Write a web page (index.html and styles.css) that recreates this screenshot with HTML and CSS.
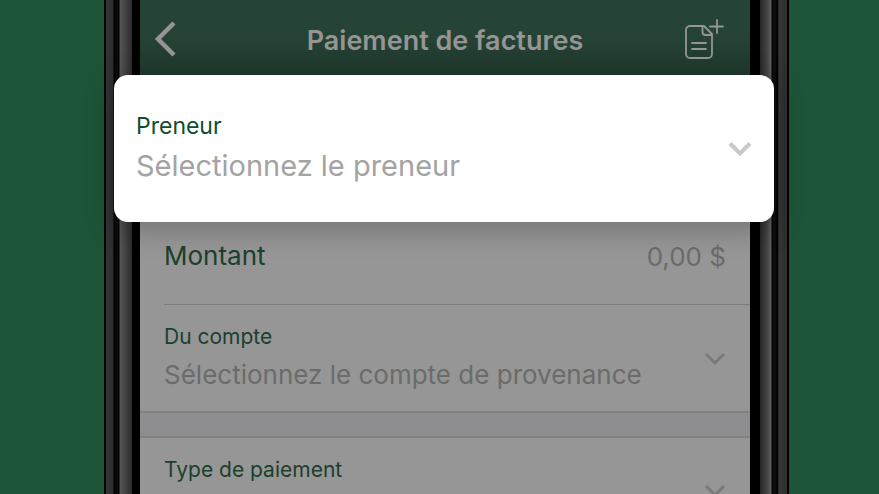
FILE: index.html
```html
<!DOCTYPE html>
<html lang="fr">
<head>
    <meta charset="UTF-8">
    <meta name="viewport" content="width=device-width, initial-scale=1.0">
    <title>Paiement de factures</title>
    <link rel="stylesheet" href="styles.css">
</head>
<body>

<div class="phone">
    <header class="topbar">
        <button class="icon-btn" type="button" aria-label="Retour">
            <svg width="40" height="42" viewBox="0 0 40 42"><path d="M20 5 L4 21 L20 37" fill="none" stroke="#959595" stroke-width="4.500"/></svg>
        </button>
        <h1>Paiement de factures</h1>
        <button class="icon-btn" type="button" aria-label="Ajouter une facture">
            <svg width="40" height="42" viewBox="0 0 40 42" fill="none" stroke="#959595" stroke-width="1.800" stroke-linecap="round" stroke-linejoin="round">
                <path d="M18.500 8H6a4 4 0 0 0-4 4v24a4 4 0 0 0 4 4h18a4 4 0 0 0 4-4V16L20 8h-1.500v6a3 3 0 0 0 3 3H28"/>
                <path d="M8 25h14M8 31h14"/>
                <path d="M33 2v13M26 8.500h13"/>
            </svg>
        </button>
    </header>

    <main>
        <div class="row card">
            <div class="field">
                <label for="payee">Preneur</label>
                <select id="payee">
                    <option>Sélectionnez le preneur</option>
                </select>
            </div>
            <svg class="chevron" width="24" height="16" viewBox="0 0 24 16"><path d="M2 2.500 L12 12.500 L22 2.500"/></svg>
        </div>

        <div class="row amount">
            <label for="amount">Montant</label>
            <input type="text" id="amount" placeholder="0,00 $">
        </div>

        <div class="row">
            <div class="field">
                <label for="account">Du compte</label>
                <select id="account">
                    <option>Sélectionnez le compte de provenance</option>
                </select>
            </div>
            <svg class="chevron" width="22" height="14" viewBox="0 0 22 14"><path d="M2 3 L11 12 L20 3"/></svg>
        </div>

        <div class="divider"></div>

        <div class="row">
            <div class="field">
                <label for="type">Type de paiement</label>
                <select id="type">
                    <option>Paiement</option>
                </select>
            </div>
            <svg class="chevron" width="22" height="14" viewBox="0 0 22 14"><path d="M2 2 L11 11 L20 2"/></svg>
        </div>
    </main>
</div>

</body>
</html>
```

FILE: styles.css
```css
* {
    box-sizing: border-box;
}
body {
    font-family: Inter, "Liberation Sans", sans-serif;
    background-color: #1c5539;
    margin: 0;
    padding: 0 90px 0 104px;
    overflow: hidden;
}
/* metal edges of the phone, drawn on both sides of the screen */
.phone {
    height: 100vh;
    overflow-x: visible;
    overflow-y: clip;
    padding: 0 39px 0 36px;
    background:
        linear-gradient(to right, #000 2px, #343434 2px, #2e2e2e 9px, #000 10px, #111 13px, #000 14px, #000 15px, #555 16px, #484848 20px, #2c2c2c 28px, #000 28px) left / 36px 100% no-repeat,
        linear-gradient(to left, #000 2px, #2e2e2e 2px, #343434 9px, #444 10px, #000 11px, #111 15px, #000 17px, #606060 18px, #484848 21px, #272727 29px, #000 29px) right / 39px 100% no-repeat,
        #969696;
}
.topbar {
    display: flex;
    align-items: center;
    justify-content: space-between;
    height: 75px;
    padding: 3px 14px 0;
    background: linear-gradient(#264435 40%, #20392d);
}
h1 {
    margin: 0;
    padding-top: 3px;
    font-size: 27px;
    line-height: 32px;
    font-weight: 600;
    color: #959595;
}
.icon-btn {
    display: flex;
    width: 52px;
    padding: 0;
    border: 0;
    background: none;
    cursor: pointer;
}
.row {
    display: flex;
    align-items: center;
    justify-content: space-between;
    height: 106px;
    padding: 0 24px;
}
.field {
    flex: 1;
    padding-top: 6px;
}
label {
    display: block;
    font-size: 21px;
    line-height: 28px;
    color: #1c3f2e;
}
select, input {
    display: block;
    width: 100%;
    margin: 0;
    padding: 0;
    border: 0;
    outline: 0;
    background: none;
    font-family: inherit;
    font-size: 26px;
    color: #6b6b6b;
}
select {
    appearance: none;
    height: 48px;
    line-height: 48px;
}
.chevron {
    fill: none;
    stroke: #7a7a7a;
    stroke-width: 3px;
}
.card {
    position: relative;
    height: 147px;
    margin: 0 -24px 0 -26px;
    padding: 0 22px;
    border-radius: 14px;
    background-color: #fff;
    box-shadow: 0 6px 30px rgba(0, 0, 0, 0.25);
}
.card label {
    font-size: 23px;
    color: #0f4d2e;
}
.card select {
    font-size: 29px;
    height: 52px;
    line-height: 52px;
    color: #a3a3a3;
}
.card .chevron {
    stroke: #c8c8c8;
    stroke-width: 4px;
}
.amount {
    height: 83px;
    margin-left: 24px;
    padding-left: 0;
    padding-bottom: 14px;
    border-bottom: 1px solid #7c7c7c;
}
.amount label {
    font-size: 26px;
    line-height: 32px;
}
.amount input {
    flex: 1;
    width: 0;
    text-align: right;
}
.amount input::placeholder {
    color: #6b6b6b;
    opacity: 1;
}
.divider {
    height: 27px;
    background-color: #8e8e91;
    border-top: 2px solid #828285;
    border-bottom: 2px solid #828285;
}
```
